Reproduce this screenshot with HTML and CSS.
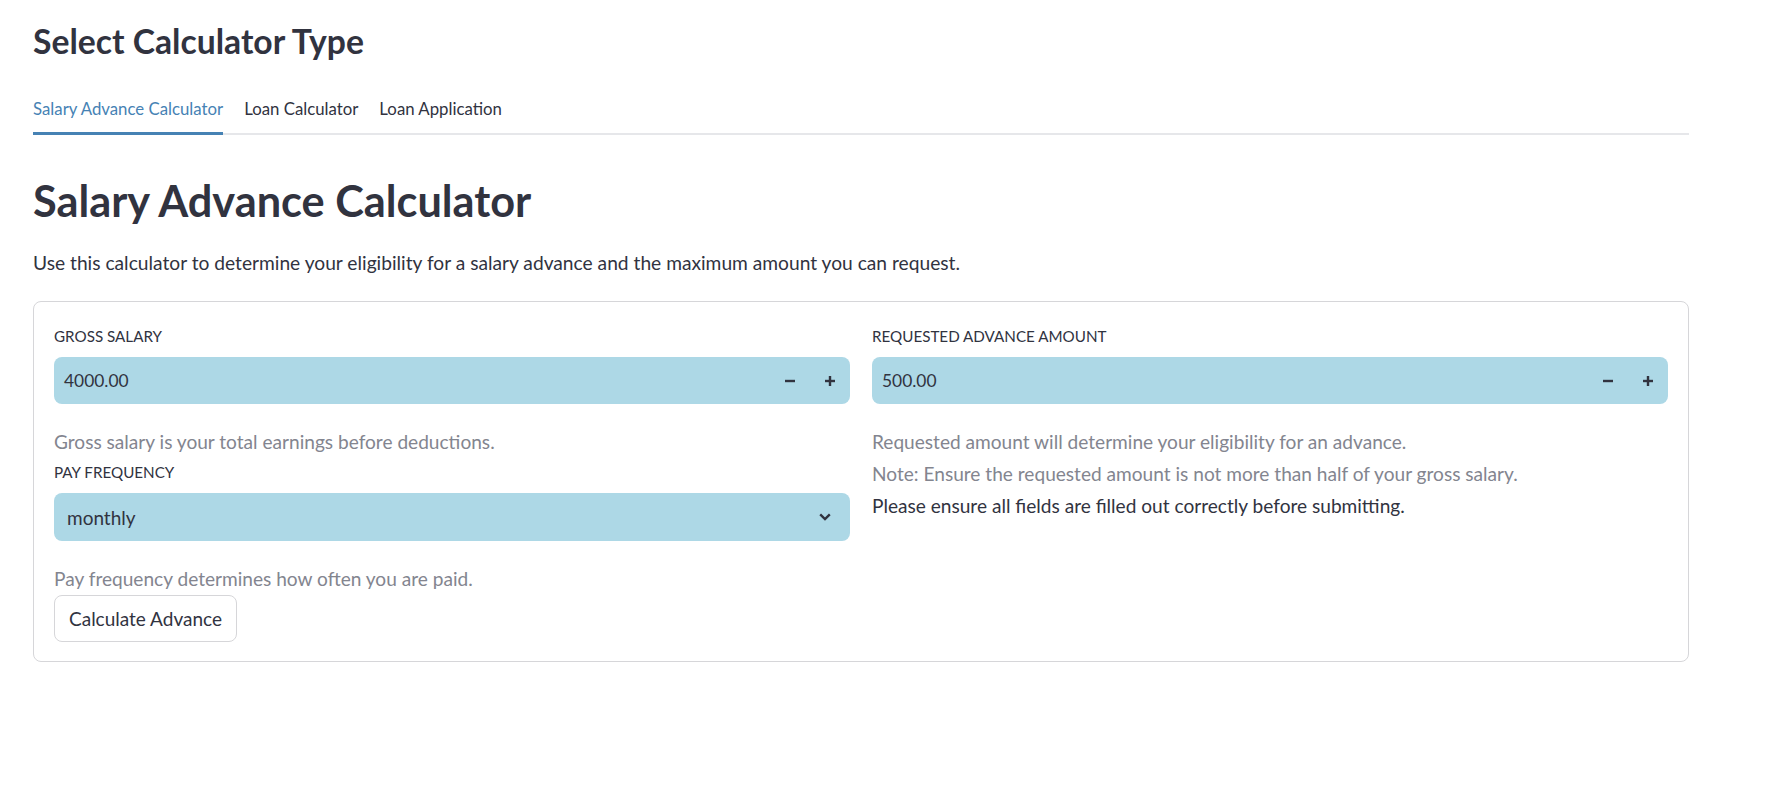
FILE: index.html
```html
<!DOCTYPE html>
<html lang="en">
<head>
<meta charset="utf-8">
<title>Select Calculator Type</title>
<link rel="stylesheet" href="styles.css">
</head>
<body>
<div class="page">
  <h3 class="title">Select Calculator Type</h3>
  <div class="tabs">
    <div class="tab active">Salary Advance Calculator</div>
    <div class="tab">Loan Calculator</div>
    <div class="tab">Loan Application</div>
  </div>
  <h1 class="heading">Salary Advance Calculator</h1>
  <p class="intro">Use this calculator to determine your eligibility for a salary advance and the maximum amount you can request.</p>
  <div class="card">
    <div class="col">
      <div class="label">GROSS SALARY</div>
      <div class="number-input">
        <span class="value">4000.00</span>
        <span class="step"><svg width="10" height="10" viewBox="0 0 10 10"><rect x="0" y="3.8" width="10" height="2.4" fill="#31333F"/></svg></span>
        <span class="step"><svg width="10" height="10" viewBox="0 0 10 10"><rect x="0" y="3.8" width="10" height="2.4" fill="#31333F"/><rect x="3.8" y="0" width="2.4" height="10" fill="#31333F"/></svg></span>
      </div>
      <p class="help">Gross salary is your total earnings before deductions.</p>
      <div class="label second">PAY FREQUENCY</div>
      <div class="select">
        <span>monthly</span>
        <svg class="chevron" width="12" height="8" viewBox="0 0 12 8"><path d="M1.2 1.4 L6 6 L10.8 1.4" fill="none" stroke="#31333F" stroke-width="2.4"/></svg>
      </div>
      <p class="help after-select">Pay frequency determines how often you are paid.</p>
      <button class="btn" type="button">Calculate Advance</button>
    </div>
    <div class="col">
      <div class="label">REQUESTED ADVANCE AMOUNT</div>
      <div class="number-input">
        <span class="value">500.00</span>
        <span class="step"><svg width="10" height="10" viewBox="0 0 10 10"><rect x="0" y="3.8" width="10" height="2.4" fill="#31333F"/></svg></span>
        <span class="step"><svg width="10" height="10" viewBox="0 0 10 10"><rect x="0" y="3.8" width="10" height="2.4" fill="#31333F"/><rect x="3.8" y="0" width="2.4" height="10" fill="#31333F"/></svg></span>
      </div>
      <p class="help">Requested amount will determine your eligibility for an advance.</p>
      <p class="help">Note: Ensure the requested amount is not more than half of your gross salary.</p>
      <p class="note">Please ensure all fields are filled out correctly before submitting.</p>
    </div>
  </div>
</div>
</body>
</html>
```
FILE: styles.css
```css
body {
  margin: 0;
  background: #ffffff;
  color: #31333F;
  font-family: Lato, "Liberation Sans", sans-serif;
}

.page {
  padding: 0 91px 0 33px;
}

.title {
  margin: 0;
  padding-top: 21px;
  font-size: 33.7px;
  line-height: 40px;
  font-weight: 700;
}

.tabs {
  display: flex;
  gap: 21px;
  margin-top: 35.5px;
  box-shadow: inset 0 -2px 0 #e6e7ea;
}

.tab {
  font-size: 16.8px;
  line-height: 24px;
  padding-bottom: 11.5px;
  border-bottom: 3px solid transparent;
}

.tab.active {
  color: #4682B4;
  border-bottom-color: #4682B4;
}

.heading {
  margin: 40px 0 0;
  font-size: 43.3px;
  line-height: 50px;
  font-weight: 700;
}

.intro {
  margin: 23px 0 0;
  font-size: 19.2px;
  line-height: 30px;
}

.card {
  margin-top: 23px;
  border: 1px solid #d6d6d9;
  border-radius: 8px;
  padding: 23px 20px 19px;
  display: grid;
  grid-template-columns: 1fr 1fr;
  column-gap: 22px;
  align-items: start;
}

.col {
  display: flex;
  flex-direction: column;
  align-items: flex-start;
}

.label {
  font-size: 15.2px;
  line-height: 22px;
}

.label.second {
  margin-top: 6px;
}

.number-input {
  margin-top: 10px;
  height: 47px;
  width: 100%;
  display: flex;
  align-items: center;
  background: #ADD8E6;
  border-radius: 8px;
}

.value {
  flex: 1;
  padding-left: 10px;
  font-size: 17.4px;
}

.step {
  width: 40px;
  height: 100%;
  display: flex;
  align-items: center;
  justify-content: center;
}

.help {
  margin: 25px 0 0;
  font-size: 19.1px;
  line-height: 26px;
  color: #83858f;
}

.help + .help {
  margin-top: 6px;
}

.help.after-select {
  margin-top: 25px;
}

.note {
  margin: 6px 0 0;
  font-size: 19.1px;
  line-height: 26px;
  color: #31333F;
}

.select {
  margin-top: 10px;
  height: 48px;
  width: 100%;
  box-sizing: border-box;
  display: flex;
  align-items: center;
  justify-content: space-between;
  padding: 0 19px 0 13px;
  background: #ADD8E6;
  border-radius: 8px;
  font-size: 19px;
}

.btn {
  margin-top: 3px;
  height: 47px;
  padding: 0 14px;
  border: 1px solid #d6d6d9;
  border-radius: 8px;
  background: #ffffff;
  font-family: inherit;
  font-size: 19px;
  color: #31333F;
}
```
